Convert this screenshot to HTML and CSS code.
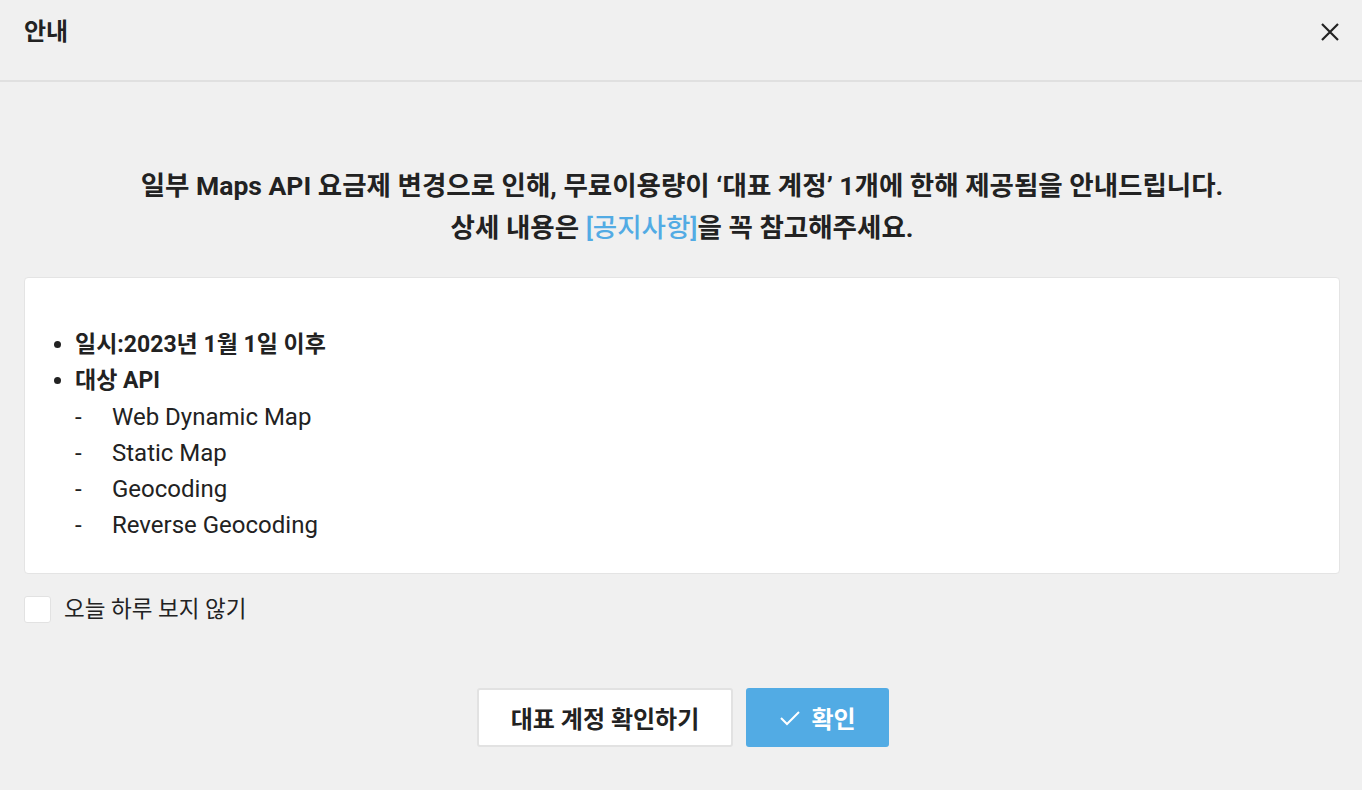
FILE: index.html
```html
<!Doctype html>
<html lang="ko">
<head>
	<meta charset="utf-8">
	<title>안내</title>
	<link rel="stylesheet" href="styles.css">
</head>
<body>
	<div class="dialog">
		<div class="dialog-head">
			<h1 class="dialog-title">안내</h1>
			<button class="close" aria-label="닫기">
				<svg width="20" height="20" viewBox="0 0 20 20"><path d="M2 2 L18 18 M18 2 L2 18" stroke="#222" stroke-width="2.2" fill="none"/></svg>
			</button>
		</div>

		<div class="dialog-body">
			<p class="notice">
				일부 Maps API 요금제 변경으로 인해, 무료이용량이 ‘대표 계정’ 1개에 한해 제공됨을 안내드립니다.<br>
				상세 내용은 <a href="#" class="link">[공지사항]</a>을 꼭 참고해주세요.
			</p>

			<div class="info-box">
				<ul class="info-list">
					<li>일시:2023년 1월 1일 이후</li>
					<li>대상 API</li>
				</ul>
				<ul class="api-list">
					<li>Web Dynamic Map</li>
					<li>Static Map</li>
					<li>Geocoding</li>
					<li>Reverse Geocoding</li>
				</ul>
			</div>

			<label class="skip">
				<span class="check"></span>
				오늘 하루 보지 않기
			</label>

			<div class="actions">
				<button class="btn btn-plain">대표 계정 확인하기</button>
				<button class="btn btn-primary">
					<svg width="22" height="16" viewBox="0 0 22 16"><path d="M2 8 L8 14 L20 2" stroke="#fff" stroke-width="2" fill="none"/></svg>
					확인
				</button>
			</div>
		</div>
	</div>
</body>
</html>
```

FILE: styles.css
```css
html, body {
	margin: 0;
	padding: 0;
	background: #f0f0f0;
	font-family: Roboto, "Noto Sans CJK KR", sans-serif;
	color: #222;
}

.dialog {
	width: 1362px;
	height: 790px;
}

.dialog-head {
	height: 80px;
	display: flex;
	align-items: flex-start;
	justify-content: space-between;
	padding: 0 24px;
	border-bottom: 2px solid #e0e0e0;
}

.dialog-title {
	margin: 0;
	margin-top: 14px;
	font-size: 24px;
	line-height: 36px;
	font-weight: 700;
}

.close {
	margin-top: 22px;
	margin-right: -2px;
	padding: 0;
	border: 0;
	background: none;
	width: 20px;
	height: 20px;
}

.dialog-body {
	padding: 0 22px 0 24px;
}

.notice {
	margin: 83px 0 0;
	text-align: center;
	font-size: 26.5px;
	line-height: 42px;
	font-weight: 700;
}

.link {
	color: #52abe4;
	text-decoration: none;
	font-weight: 500;
}

.info-box {
	margin-top: 28px;
	height: 246px;
	padding: 49px 0 0 0;
	background: #fff;
	border: 1px solid #e4e4e4;
	border-radius: 4px;
}

.info-list {
	margin: 0;
	padding-left: 50px;
	font-size: 23px;
	line-height: 36px;
	font-weight: 700;
}

.api-list {
	margin: 0;
	padding-left: 87px;
	list-style: none;
	font-size: 24px;
	line-height: 36px;
}

.api-list li {
	position: relative;
}

.api-list li:before {
	content: "-";
	position: absolute;
	left: -37px;
}

.skip {
	display: flex;
	align-items: center;
	gap: 13px;
	margin-top: 21px;
	font-size: 22.5px;
	line-height: 28px;
}

.check {
	width: 25px;
	height: 25px;
	background: #fff;
	border: 1px solid #e2e2e2;
	border-radius: 3px;
}

.actions {
	display: flex;
	justify-content: center;
	gap: 13px;
	margin-top: 65px;
	padding-left: 2px;
}

.btn {
	height: 59px;
	font-family: Roboto, "Noto Sans CJK KR", sans-serif;
	font-size: 24px;
	font-weight: 700;
	border-radius: 3px;
	display: flex;
	align-items: center;
	justify-content: center;
	gap: 10px;
}

.btn-plain {
	width: 256px;
	background: #fff;
	color: #222;
	border: 2px solid #e2e2e2;
}

.btn-primary {
	width: 143px;
	background: #52abe4;
	color: #fff;
	border: 0;
}
```
